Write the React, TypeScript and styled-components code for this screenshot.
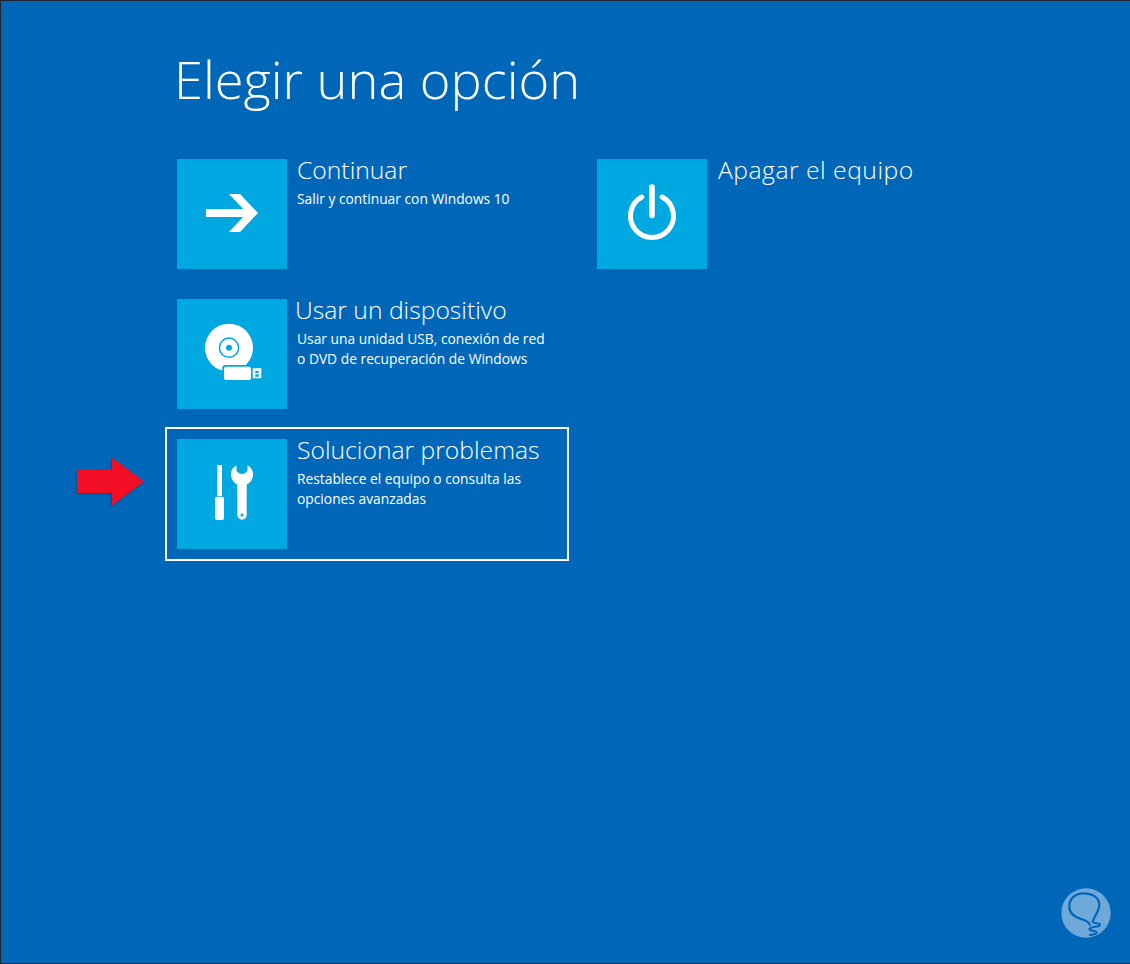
import React from "react";
import styled, { createGlobalStyle } from "styled-components";

const Global = createGlobalStyle`
  html, body { margin: 0; padding: 0; background: #0067b8; }
`;

const Screen = styled.main`
  position: relative;
  box-sizing: border-box;
  width: 1130px;
  height: 964px;
  overflow: hidden;
  background: #0067b8;
  border: 1px solid #1c2733;
  border-right: 0;
  padding: 39px 0 0 164px;
  color: #fff;
  font-family: "Open Sans", "Noto Sans", "Liberation Sans", sans-serif;
`;

const Title = styled.h1`
  margin: 0 0 29px 9px;
  font-size: 52.4px;
  line-height: 78px;
  font-weight: 300;
`;

const Columns = styled.div`
  display: grid;
  grid-template-columns: 404px 404px;
  column-gap: 16px;
  align-items: start;
`;

const Column = styled.div`
  display: flex;
  flex-direction: column;
  gap: 6px;
`;

const Option = styled.div<{ $selected?: boolean }>`
  box-sizing: border-box;
  display: flex;
  gap: 10px;
  width: 404px;
  height: 134px;
  padding: 10px;
  border: 2px solid ${(p) => (p.$selected ? "#fff" : "transparent")};
`;

const Tile = styled.div`
  flex: none;
  width: 110px;
  height: 110px;
  background: #00a8e2;
`;

const TileIcon = styled.svg`
  display: block;
  width: 110px;
  height: 110px;
`;

const Copy = styled.div`
  display: flex;
  flex-direction: column;
`;

const Heading = styled.div<{ $indent?: number; $tracking?: number }>`
  font-size: 24.7px;
  line-height: 26px;
  font-weight: 300;
  margin: -2px 0 6px ${(p) => p.$indent ?? 0}px;
  letter-spacing: ${(p) => p.$tracking ?? 0}px;
`;

const Detail = styled.div`
  font-size: 13.8px;
  line-height: 20px;
  font-weight: 400;
`;

const Pointer = styled.svg`
  position: absolute;
  left: 76px;
  top: 456px;
  filter: drop-shadow(-1px 1px 1px rgba(0, 30, 70, 0.45));
`;

const Badge = styled.svg`
  position: absolute;
  left: 1060px;
  top: 887px;
`;

const ArrowIcon = () => (
  <TileIcon viewBox="0 0 110 110">
    <path d="M29 50H66.200L52 35H63L81 54L63 73H52L66.200 58H29z" fill="#fff" />
  </TileIcon>
);

const DiscIcon = () => (
  <TileIcon viewBox="0 0 110 110">
    <circle cx="52" cy="48.700" r="24" fill="#fff" />
    <circle cx="52" cy="48.700" r="9.600" fill="none" stroke="#00a8e2" strokeWidth="1.500" />
    <circle cx="52" cy="48.700" r="3" fill="#00a8e2" />
    <rect x="45.300" y="66" width="31" height="17" rx="3" fill="#00a8e2" />
    <rect x="47" y="67.700" width="27" height="13.300" rx="2" fill="#fff" />
    <path
      fillRule="evenodd"
      d="M75.700 69.300h8.600v10h-8.600zM78.300 71.700v2.300h3.400v-2.300zM78.300 75.300v2.400h3.400v-2.400z"
      fill="#fff"
    />
  </TileIcon>
);

const ToolsIcon = () => (
  <TileIcon viewBox="0 0 110 110">
    <path d="M40.300 26H45V57H40.300z" fill="#fff" />
    <path d="M40 57.700h5a2 2 0 0 1 2 2V79a2 2 0 0 1-2 2h-5a2 2 0 0 1-2-2V59.700a2 2 0 0 1 2-2z" fill="#fff" />
    <path
      fillRule="evenodd"
      d="M59.500 26.500V32Q65 38.500 70.500 32V26.500C74 28 76 31.500 76 35.500C76 40 73.500 43.500 69.700 45.500V76a4.700 4.700 0 0 1-9.400 0V45.500C56.500 43.500 54 40 54 35.500C54 31.500 56 28 59.500 26.500zM65 74.400a1.600 1.600 0 1 0 0 3.200a1.600 1.600 0 0 0 0-3.200z"
      fill="#fff"
    />
  </TileIcon>
);

const PowerIcon = () => (
  <TileIcon viewBox="0 0 110 110">
    <path d="M55 28v28.500" stroke="#fff" strokeWidth="5.600" strokeLinecap="round" fill="none" />
    <path d="M44.800 38A21.500 21.500 0 1 0 65.200 38" stroke="#fff" strokeWidth="5" strokeLinecap="round" fill="none" />
  </TileIcon>
);

export default function App() {
  return (
    <Screen>
      <Global />
      <Title>Elegir una opción</Title>
      <Columns>
        <Column>
          <Option>
            <Tile><ArrowIcon /></Tile>
            <Copy>
              <Heading>Continuar</Heading>
              <Detail>Salir y continuar con Windows 10</Detail>
            </Copy>
          </Option>
          <Option>
            <Tile><DiscIcon /></Tile>
            <Copy>
              <Heading $indent={-2}>Usar un dispositivo</Heading>
              <Detail>
                Usar una unidad USB, conexión de red
                <br />o DVD de recuperación de Windows
              </Detail>
            </Copy>
          </Option>
          <Option $selected>
            <Tile><ToolsIcon /></Tile>
            <Copy>
              <Heading>Solucionar problemas</Heading>
              <Detail>
                Restablece el equipo o consulta las
                <br />opciones avanzadas
              </Detail>
            </Copy>
          </Option>
        </Column>
        <Column>
          <Option>
            <Tile><PowerIcon /></Tile>
            <Copy>
              <Heading $indent={1} $tracking={0.5}>Apagar el equipo</Heading>
            </Copy>
          </Option>
        </Column>
      </Columns>
      <Pointer width="68" height="50" viewBox="0 0 68 50">
        <path d="M0 13H35V.5L67 24.500L35 48.500V36H0z" fill="#f20f25" />
      </Pointer>
      <Badge width="50" height="50" viewBox="0 0 50 50">
        <circle cx="25" cy="25" r="24.700" fill="#6fa9da" />
        <path
          d="M29 37C28 33.500 24 32.500 20 31C14 29 8 25 8.300 18C8.500 10 15 5 23 5.300C32 5.600 38.500 10 38.300 17C38 24 33 28 31.700 34C33 36 39 34.500 39 37C39 39.500 28 38.500 28.300 41C28.500 43 36 42.500 35.700 44.700C35.500 46.500 31 46.800 29 47"
          fill="none"
          stroke="#0067b8"
          strokeWidth="2.200"
          strokeLinecap="round"
        />
      </Badge>
    </Screen>
  );
}
